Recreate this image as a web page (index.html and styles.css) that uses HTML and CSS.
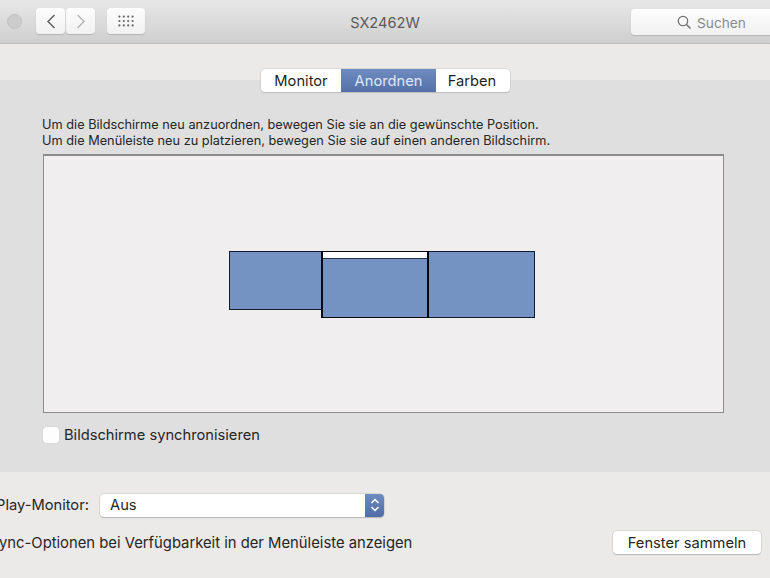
FILE: index.html
```html
<!DOCTYPE html>
<html lang="de">
<head>
<meta charset="utf-8">
<title>SX2462W</title>
<link rel="stylesheet" href="styles.css">
</head>
<body>
<div class="window">
  <header class="toolbar">
    <span class="close"></span>
    <div class="nav">
      <button class="tb-btn nav-btn"><svg width="10" height="15" viewBox="0 0 10 15"><path d="M8.500 1 2 7.500 8.500 14" fill="none" stroke="#5c5c5c" stroke-width="1.400"/></svg></button>
      <button class="tb-btn nav-btn"><svg width="10" height="15" viewBox="0 0 10 15"><path d="M1.500 1 8 7.500 1.500 14" fill="none" stroke="#b4b4b4" stroke-width="1.400"/></svg></button>
    </div>
    <button class="tb-btn grid-btn"><svg width="18" height="12" viewBox="0 0 18 12" fill="#666"><circle cx="2.400" cy="1.600" r="1.100"/><circle cx="6.800" cy="1.600" r="1.100"/><circle cx="11.200" cy="1.600" r="1.100"/><circle cx="15.600" cy="1.600" r="1.100"/><circle cx="2.400" cy="6" r="1.100"/><circle cx="6.800" cy="6" r="1.100"/><circle cx="11.200" cy="6" r="1.100"/><circle cx="15.600" cy="6" r="1.100"/><circle cx="2.400" cy="10.400" r="1.100"/><circle cx="6.800" cy="10.400" r="1.100"/><circle cx="11.200" cy="10.400" r="1.100"/><circle cx="15.600" cy="10.400" r="1.100"/></svg></button>
    <h1 class="title">SX2462W</h1>
    <div class="search"><svg width="15" height="15" viewBox="0 0 15 15"><circle cx="6" cy="6" r="4.700" fill="none" stroke="#6e6e6e" stroke-width="1.200"/><path d="M9.500 9.500 13.500 13.500" stroke="#6e6e6e" stroke-width="1.400"/></svg><span>Suchen</span></div>
  </header>
  <div class="strip"></div>
  <main class="panel">
    <nav class="tabs">
      <span class="tab">Monitor</span>
      <span class="tab active">Anordnen</span>
      <span class="tab">Farben</span>
    </nav>
    <p class="hint">Um die Bildschirme neu anzuordnen, bewegen Sie sie an die gewünschte Position.<br>Um die Menüleiste neu zu platzieren, bewegen Sie sie auf einen anderen Bildschirm.</p>
    <div class="canvas">
      <div class="display d-left"></div>
      <div class="display d-main"><div class="menubar"></div></div>
      <div class="display d-right"></div>
    </div>
    <label class="check"><span class="box"></span>Bildschirme synchronisieren</label>
  </main>
  <footer class="footer">
    <div class="row-play">
      <span class="play-label">Play-Monitor:</span>
      <div class="select"><span>Aus</span><span class="stepper"><svg width="10" height="16" viewBox="0 0 10 16" fill="none" stroke="#fff" stroke-width="1.500"><path d="M1.500 6 5 2.500 8.500 6M1.500 10 5 13.500 8.500 10"/></svg></span></div>
    </div>
    <div class="row-sync">
      <span class="sync-label">ync-Optionen bei Verfügbarkeit in der Menüleiste anzeigen</span>
      <button class="collect">Fenster sammeln</button>
    </div>
  </footer>
</div>
</body>
</html>
```
FILE: styles.css
```css
* { box-sizing: border-box; }
html, body { margin: 0; padding: 0; }
body { width: 770px; height: 578px; overflow: hidden; font-family: Inter, "Liberation Sans", sans-serif; color: #222; }
.window { width: 770px; height: 578px; display: flex; flex-direction: column; overflow: hidden; background: #ebeae8; }

.toolbar { height: 44px; flex: none; display: flex; align-items: center; padding: 0 0 1px 7px; background: linear-gradient(#e8e7e7, #d0cfcf); border-bottom: 1px solid #c0bfbf; position: relative; }
.close { width: 15px; height: 15px; border-radius: 50%; background: #cdcccc; border: 1px solid #c2c1c1; }
.nav { display: flex; gap: 1px; margin-left: 14px; }
.tb-btn { height: 26px; padding: 0; border: 0; border-radius: 4px; background: linear-gradient(#fdfdfd, #f2f1f1); box-shadow: 0 1px 1px #b5b4b4; display: flex; align-items: center; justify-content: center; }
.nav-btn { width: 29px; }
.grid-btn { width: 38px; margin-left: 12px; }
.title { position: absolute; left: 0; width: 770px; top: 14px; margin: 0; text-align: center; font-size: 14.600px; line-height: 18px; font-weight: 400; color: #5a5a5a; }
.search { position: absolute; left: 631px; top: 9px; width: 150px; height: 26px; border-radius: 4px; background: linear-gradient(#fdfdfd, #f2f1f1); box-shadow: 0 1px 1px #b5b4b4; display: flex; align-items: center; padding-left: 46px; gap: 5px; font-size: 13.700px; color: #8a8a8a; }
.search span { position: relative; top: 1px; }

.strip { height: 36px; flex: none; background: #ebeae9; }
.panel { height: 392px; flex: none; background: #e0dfdf; position: relative; padding: 37px 0 0 42px; }
.tabs { position: absolute; left: 261px; top: -11px; width: 249px; height: 23px; display: flex; background: #fff; border-radius: 4px; box-shadow: 0 0 0 .5px #c4c3c3, 0 1px 1px #b5b4b4; font-size: 14.700px; overflow: hidden; }
.tab { display: flex; align-items: center; justify-content: center; width: 80px; color: #1f1f1f; }
.tab.active { width: 95px; flex: none; background: linear-gradient(#6f8cc0, #5470a8); color: #dfe6f4; }
.tab:last-child { flex: 1; padding-right: 2px; }

.hint { margin: 0; font-size: 12.750px; line-height: 16px; color: #262626; }
.canvas { position: relative; width: 681px; height: 259px; margin: 5px 0 0 1px; background: #f0eeef; border: 1px solid #8c8c8c; border-top-width: 2px; }
.display { position: absolute; background: #7493c3; border: 1px solid #111c2e; }
.d-left { left: 185px; top: 95px; width: 93px; height: 59px; }
.d-main { left: 277px; top: 95px; width: 108px; height: 67px; border-width: 1px 2px; border-color: #05080f; }
.menubar { height: 6px; background: #fff; border-bottom: 1px solid #23324d; box-sizing: content-box; }
.d-right { left: 385px; top: 95px; width: 106px; height: 67px; border-left: 0; }

.check { display: flex; align-items: center; gap: 5px; margin: 13px 0 0 1px; font-size: 14.700px; line-height: 18px; color: #262626; }
.box { width: 16px; height: 16px; border-radius: 3px; background: #fdfdfd; box-shadow: 0 0 1px #a5a5a5; }

.footer { flex: 1; padding-top: 21px; font-size: 14.700px; color: #262626; }
.row-play { display: flex; align-items: center; height: 24px; margin-left: -4px; }
.play-label { width: 104px; flex: none; }
.select { width: 284px; height: 23px; border-radius: 4px; background: #fff; box-shadow: 0 0 0 .5px #c4c3c3, 0 1px 1px #adacac; display: flex; align-items: center; justify-content: space-between; padding-left: 10px; overflow: hidden; }
.stepper { width: 19px; height: 23px; background: linear-gradient(#6f8cc0, #506ca6); display: flex; align-items: center; justify-content: center; }
.row-sync { display: flex; align-items: center; justify-content: space-between; margin: 14px 9px 0 -1px; }
.sync-label { font-size: 14.800px; }
.collect { width: 148px; height: 23px; padding: 0; border: 0; border-radius: 4px; background: #fff; box-shadow: 0 0 0 .5px #c4c3c3, 0 1px 1px #adacac; font: inherit; color: #262626; }
```
